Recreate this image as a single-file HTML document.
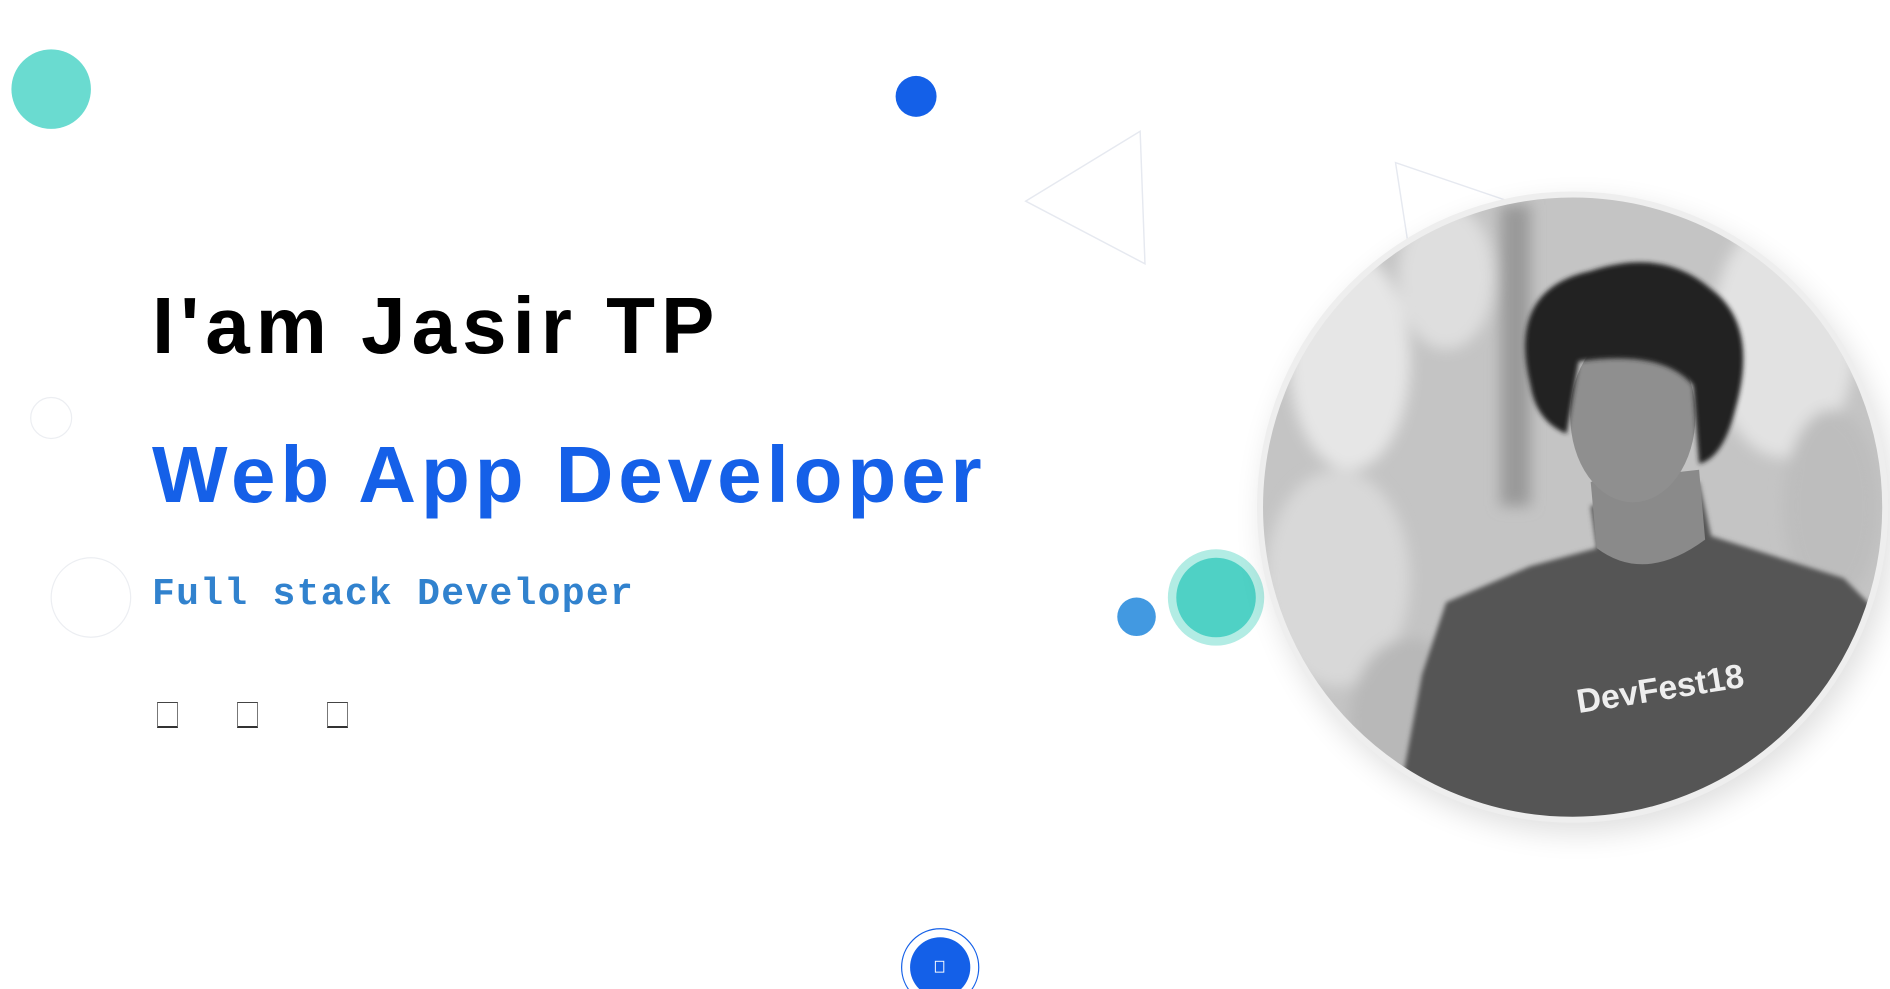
<!DOCTYPE html>
<html><head><meta charset="utf-8"><style>
html,body{margin:0;padding:0;background:#fff;width:1890px;height:989px;overflow:hidden;position:relative}
.t{position:absolute;white-space:nowrap;line-height:1}
.box{position:absolute;width:21px;height:26px;border:1px solid #777;border-top-color:#444;border-bottom:2px solid #333;box-sizing:border-box}
</style></head><body>
<svg width="1890" height="989" viewBox="0 0 1568 821" style="position:absolute;left:0;top:0">
<defs>
<clipPath id="c"><circle cx="1305" cy="421" r="258"/></clipPath>
<filter id="sh" x="-20%" y="-20%" width="140%" height="140%"><feGaussianBlur stdDeviation="12"/></filter>
<filter id="bl"><feGaussianBlur stdDeviation="6"/></filter>
<filter id="bl2"><feGaussianBlur stdDeviation="2"/></filter>
</defs>
<circle cx="42" cy="74" r="33" fill="#6adbd0"/>
<circle cx="760" cy="80" r="17" fill="#1460e8"/>
<circle cx="42" cy="347" r="17" fill="none" stroke="#eceef2" stroke-width="1"/>
<circle cx="75" cy="496" r="33" fill="none" stroke="#eceef2" stroke-width="1"/>
<polygon points="851,167 946,109 950,219" fill="none" stroke="#e6e9f0" stroke-width="1.2"/>
<polygon points="1158,135 1290,180 1175,245" fill="none" stroke="#e6e9f0" stroke-width="1.2"/>
<circle cx="943" cy="512" r="16" fill="#4299e1"/>
<circle cx="1009" cy="496" r="40" fill="#b2ece4"/>
<circle cx="1009" cy="496" r="33" fill="#4fd1c5"/>
<circle cx="1310" cy="430" r="262" fill="#000" opacity="0.12" filter="url(#sh)"/>
<circle cx="1305" cy="421" r="262" fill="#eeeeee"/>
<g clip-path="url(#c)">
<rect x="1040" y="160" width="530" height="530" fill="#c4c4c4"/>
<g filter="url(#bl)">
<ellipse cx="1120" cy="300" rx="50" ry="90" fill="#e6e6e6"/>
<ellipse cx="1200" cy="230" rx="40" ry="60" fill="#dedede"/>
<ellipse cx="1480" cy="280" rx="60" ry="100" fill="#e2e2e2"/>
<ellipse cx="1110" cy="480" rx="60" ry="90" fill="#d8d8d8"/>
<rect x="1245" y="170" width="25" height="250" fill="#9a9a9a"/>
<ellipse cx="1520" cy="420" rx="40" ry="80" fill="#bdbdbd"/>
<ellipse cx="1170" cy="600" rx="50" ry="70" fill="#b8b8b8"/>
</g>
<path d="M1320,420 L1325,455 L1270,470 L1200,500 L1180,560 L1165,640 L1200,700 L1560,700 L1560,510 L1530,480 L1420,445 L1410,400 Z" fill="#555" filter="url(#bl2)"/>
<path d="M1320,400 L1325,455 Q1365,485 1415,448 L1410,390 Z" fill="#8a8a8a"/>
<ellipse cx="1355" cy="345" rx="52" ry="72" fill="#8f8f8f"/>
<path d="M1270,320 Q1250,240 1320,225 Q1380,205 1420,240 Q1460,270 1440,340 Q1430,380 1410,385 L1405,320 Q1380,290 1310,300 L1300,360 Q1275,350 1270,320 Z" fill="#222" filter="url(#bl2)"/>
<text x="1310" y="592" transform="rotate(-9 1310 592)" font-family="Liberation Sans,sans-serif" font-size="28" font-weight="bold" fill="#eee">DevFest18</text>
</g>
<circle cx="1305" cy="421" r="259" fill="none" stroke="#eeeeee" stroke-width="4"/>
<circle cx="780" cy="803" r="32" fill="none" stroke="#1460e8" stroke-width="1"/>
<circle cx="780" cy="803" r="25" fill="#1460e8"/>
<rect x="776" y="798" width="7" height="9" fill="none" stroke="#fff" stroke-width="0.8"/>
</svg>
<div class="t" style="left:152px;top:280px;font:bold 80px 'Liberation Sans',sans-serif;letter-spacing:6px;color:#000">I'am Jasir TP</div>
<div class="t" style="left:152px;top:429px;font:bold 80px 'Liberation Sans',sans-serif;letter-spacing:4.9px;color:#1560e8">Web App Developer</div>
<div class="t" style="left:152px;top:573px;font:bold 38px 'Liberation Mono',monospace;letter-spacing:1.3px;color:#3182ce">Full stack Developer</div>
<div class="box" style="left:157px;top:702px"></div>
<div class="box" style="left:237px;top:702px"></div>
<div class="box" style="left:327px;top:702px"></div>
</body></html>
